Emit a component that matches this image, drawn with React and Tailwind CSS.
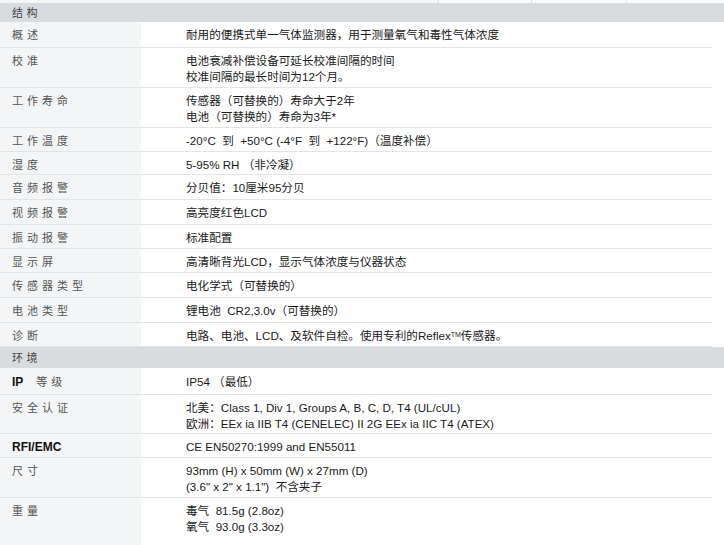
import React from 'react';

const sans = { fontFamily: '"Liberation Sans", "Noto Sans CJK SC", sans-serif' };

// h = row height in px, taken from the reference
const structure = [
  { label: '概述', h: 'h-[26px]', lines: ['耐用的便携式单一气体监测器，用于测量氧气和毒性气体浓度'] },
  { label: '校准', h: 'h-[40px]', lines: ['电池衰减补偿设备可延长校准间隔的时间', '校准间隔的最长时间为12个月。'] },
  { label: '工作寿命', h: 'h-[40px]', lines: ['传感器（可替换的）寿命大于2年', '电池（可替换的）寿命为3年*'] },
  { label: '工作温度', h: 'h-[24px]', lines: ['-20°C  到  +50°C (-4°F  到  +122°F)（温度补偿）'] },
  { label: '湿度', h: 'h-[23px]', lines: ['5-95% RH （非冷凝）'] },
  { label: '音频报警', h: 'h-[25px]', lines: ['分贝值：10厘米95分贝'] },
  { label: '视频报警', h: 'h-[25px]', lines: ['高亮度红色LCD'] },
  { label: '振动报警', h: 'h-[24px]', lines: ['标准配置'] },
  { label: '显示屏', h: 'h-[24px]', lines: ['高清晰背光LCD，显示气体浓度与仪器状态'] },
  { label: '传感器类型', h: 'h-[25px]', lines: ['电化学式（可替换的）'] },
  { label: '电池类型', h: 'h-[25px]', lines: ['锂电池  CR2,3.0v（可替换的）'] },
  { label: '诊断', h: 'h-[24px]', lines: [<>电路、电池、LCD、及软件自检。使用专利的Reflex<sup className="text-[7px]">TM</sup>传感器。</>] },
];

const environment = [
  { label: <><b className="text-[12px] tracking-normal text-[#111]" style={sans}>IP</b>&nbsp; 等级</>, h: 'h-[27px]', pt: 'pt-[6px]', lines: ['IP54 （最低）'] },
  { label: '安全认证', h: 'h-[39px]', lines: ['北美：Class 1, Div 1, Groups A, B, C, D, T4 (UL/cUL)', '欧洲：EEx ia IIB T4 (CENELEC) II 2G EEx ia IIC T4 (ATEX)'] },
  { label: <b className="text-[12px] tracking-normal text-[#111]" style={sans}>RFI/EMC</b>, h: 'h-[24px]', lines: ['CE EN50270:1999 and EN55011'] },
  { label: '尺寸', h: 'h-[40px]', lines: ['93mm (H) x 50mm (W) x 27mm (D)', '(3.6" x 2" x 1.1")  不含夹子'] },
  { label: '重量', h: 'flex-1', lines: ['毒气  81.5g (2.8oz)', '氧气  93.0g (3.3oz)'], last: true },
];

function Header({ title, h }) {
  return (
    <div className={`${h} shrink-0 bg-[#d9dcdf] flex items-center pl-[12px] text-[11px] tracking-[3.5px] text-[#444]`}>
      {title}
    </div>
  );
}

function Row({ label, lines, h, pt = 'pt-[5px]', last }) {
  const line = last ? '' : 'border-b border-[#e3e4e5]';
  return (
    <div className={`flex shrink-0 overflow-hidden ${h}`}>
      <div className={`w-[141px] shrink-0 bg-[#f4f5f6] pl-[12px] ${pt} ${line} text-[11px] leading-[15px] tracking-[4px] text-[#555]`}>
        {label}
      </div>
      <div className="flex-1 flex pr-[12px]">
        <div className={`flex-1 pl-[45px] ${pt} ${line} text-[11.6px] leading-[15.5px] text-[#1a1a1a]`} style={sans}>
          {lines.map((l, i) => (
            <div key={i} className="whitespace-pre h-[15.5px]">{l}</div>
          ))}
        </div>
      </div>
    </div>
  );
}

export default function App() {
  return (
    <div className="w-[724px] h-[545px] overflow-hidden bg-white flex flex-col" style={{ fontFamily: '"Noto Sans CJK SC", sans-serif' }}>
      {/* tail of the table above */}
      <div className="h-[3px] shrink-0 flex bg-[#f6f6f6]">
        <div className="w-[439px] border-r border-[#dcdcdc]" />
        <div className="w-[93px] border-r border-[#dcdcdc] bg-white" />
        <div className="w-[95px] border-r border-[#dcdcdc] bg-white" />
        <div className="flex-1 bg-white" />
      </div>
      <Header title="结构" h="h-[19px]" />
      {structure.map((r, i) => (
        <Row key={i} {...r} />
      ))}
      <Header title="环境" h="h-[21px]" />
      {environment.map((r, i) => (
        <Row key={i} {...r} />
      ))}
    </div>
  );
}
